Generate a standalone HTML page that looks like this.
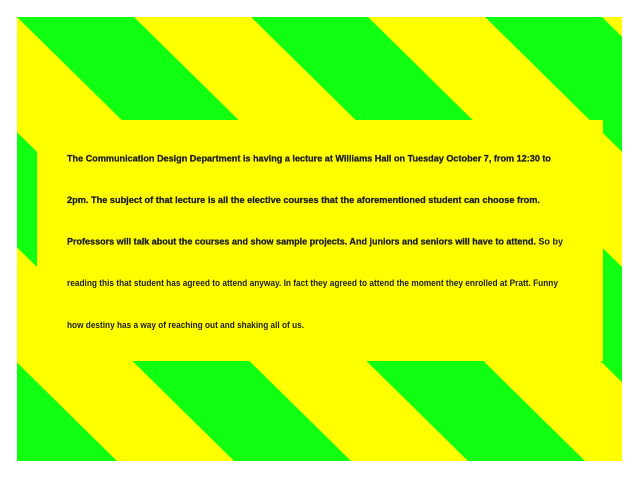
<!DOCTYPE html>
<html><head><meta charset="utf-8"><style>
html,body{margin:0;padding:0;background:#fff;width:640px;height:480px;overflow:hidden}
#bg{position:absolute;left:17px;top:17px;width:605px;height:444px;background:#ffff00;overflow:hidden}
#box{position:absolute;left:37px;top:120px;width:566px;height:241px;background:#ffff00}
svg text{font-family:"Liberation Sans",Arial,sans-serif;font-size:9.5px;fill:#1e1e1e}
</style></head><body>
<div id="bg"><svg width="605" height="444" viewBox="17 17 605 444" style="display:block">
<g fill="#11ff11">
<polygon points="-451,17 -334,17 117,461 0,461"/>
<polygon points="-217,17 -100,17 351,461 234,461"/>
<polygon points="17,17 134,17 585,461 468,461"/>
<polygon points="251,17 368,17 819,461 702,461"/>
<polygon points="485,17 602,17 1053,461 936,461"/>
</g></svg></div>
<div id="box"></div>
<svg width="640" height="480" style="position:absolute;left:0;top:0">
<text x="67" y="161.5" font-weight="bold" stroke="#1e1e1e" stroke-width="0.3" textLength="484" lengthAdjust="spacingAndGlyphs">The Communication Design Department is having a lecture at Williams Hall on Tuesday October 7, from 12:30 to</text>
<text x="67" y="203" font-weight="bold" stroke="#1e1e1e" stroke-width="0.3" textLength="473" lengthAdjust="spacingAndGlyphs">2pm. The subject of that lecture is all the elective courses that the aforementioned student can choose from.</text>
<text x="67" y="244.5" textLength="496" lengthAdjust="spacingAndGlyphs"><tspan font-weight="bold" stroke="#1e1e1e" stroke-width="0.3">Professors will talk about the courses and show sample projects. And juniors and seniors will have to attend.</tspan><tspan font-weight="bold"> So by</tspan></text>
<text x="67" y="286" font-weight="bold" textLength="491" lengthAdjust="spacingAndGlyphs">reading this that student has agreed to attend anyway. In fact they agreed to attend the moment they enrolled at Pratt. Funny</text>
<text x="67" y="328" font-weight="bold" textLength="237" lengthAdjust="spacingAndGlyphs">how destiny has a way of reaching out and shaking all of us.</text>
</svg>
</body></html>
